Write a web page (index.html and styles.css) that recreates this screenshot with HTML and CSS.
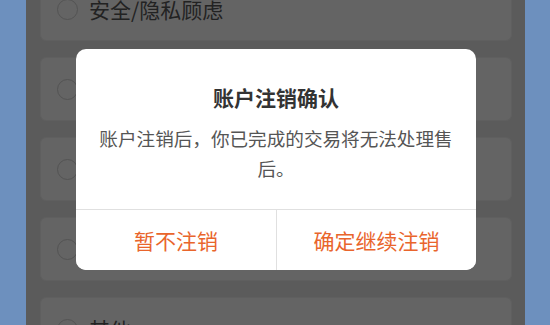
FILE: index.html
```html
<!DOCTYPE html>
<html lang="zh-CN">
<head>
<meta charset="utf-8">
<title>账户注销确认</title>
<link rel="stylesheet" href="styles.css">
</head>
<body>
<div class="app">
  <ul class="reasons">
    <li class="reason"><span class="radio"></span><span class="label">安全/隐私顾虑</span></li>
    <li class="reason"><span class="radio"></span><span class="label"></span></li>
    <li class="reason"><span class="radio"></span><span class="label"></span></li>
    <li class="reason"><span class="radio"></span><span class="label"></span></li>
    <li class="reason"><span class="radio"></span><span class="label">其他</span></li>
  </ul>
</div>
<div class="dialog">
  <div class="dialog-body">
    <div class="dialog-title">账户注销确认</div>
    <div class="dialog-text">账户注销后，你已完成的交易将无法处理售后。</div>
  </div>
  <div class="dialog-actions">
    <button class="btn">暂不注销</button>
    <button class="btn">确定继续注销</button>
  </div>
</div>
</body>
</html>
```
FILE: styles.css
```css
html, body {
  margin: 0;
  padding: 0;
  height: 100%;
  overflow: hidden;
}
body {
  background: #6d90be;
  font-family: "Noto Sans CJK SC", "Noto Sans", sans-serif;
  position: relative;
}
.app {
  display: flow-root;
  margin: 0 25px 0 26px;
  height: 100%;
  background: #5b5b5b;
  padding: 0 13px 0 14px;
  box-sizing: border-box;
  overflow: hidden;
}
.reasons {
  list-style: none;
  margin: -23px 0 0 0;
  padding: 0;
  display: flex;
  flex-direction: column;
  gap: 16px;
}
.reason {
  height: 64px;
  flex: none;
  box-sizing: border-box;
  background: #646464;
  border: 1px solid #5f5f5f;
  border-radius: 6px;
  display: flex;
  align-items: center;
  padding-left: 16px;
  gap: 11px;
}
.radio {
  width: 21px;
  height: 21px;
  box-sizing: border-box;
  border: 1px solid #535353;
  border-radius: 50%;
  flex: none;
}
.label {
  font-size: 21px;
  color: #222;
  line-height: 28px;
}
.dialog {
  position: absolute;
  left: 76px;
  top: 49px;
  width: 400px;
  height: 221px;
  background: #fff;
  border-radius: 10px;
  overflow: hidden;
  display: flex;
  flex-direction: column;
}
.dialog-body {
  padding: 34px 20px 26px;
  text-align: center;
  border-bottom: 1px solid #e0e0e0;
}
.dialog-title {
  font-size: 21px;
  font-weight: bold;
  line-height: 28px;
  color: #333;
}
.dialog-text {
  margin-top: 12px;
  font-size: 18.6px;
  line-height: 30px;
  color: #555;
}
.dialog-actions {
  flex: 1;
  display: grid;
  grid-template-columns: 1fr 1fr;
}
.btn {
  font-family: inherit;
  font-size: 21px;
  color: #e9652c;
  background: #fff;
  border: 0;
  padding: 0;
  margin: 0;
}
.btn + .btn {
  border-left: 1px solid #e0e0e0;
}
```
